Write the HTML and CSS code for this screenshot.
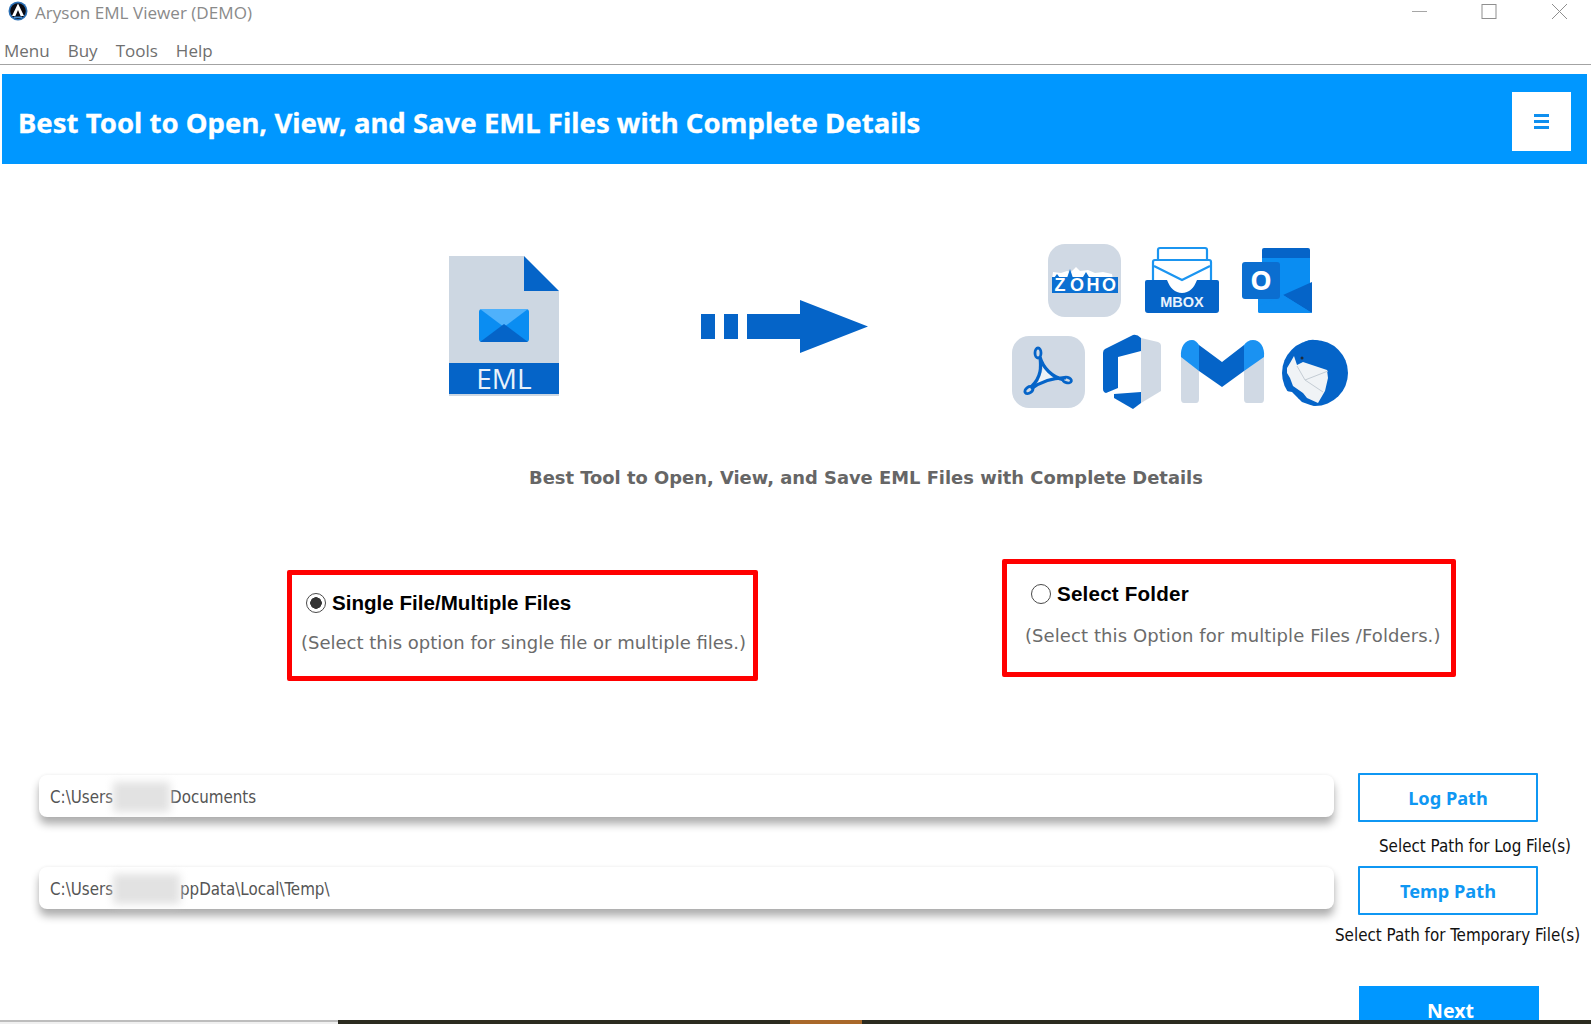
FILE: index.html
```html
<!DOCTYPE html>
<html lang="en">
<head>
<meta charset="utf-8">
<title>Aryson EML Viewer (DEMO)</title>
<link rel="stylesheet" href="styles.css">
</head>
<body>
<div class="app">
  <header class="titlebar">
    <svg class="app-logo" width="20" height="20" viewBox="0 0 20 20">
      <circle cx="10" cy="10" r="9.500" fill="#2a6fb5"/>
      <circle cx="10" cy="10" r="7.800" fill="#0a0a12"/>
      <path d="M10 2.500L16 15H12.600L10 9L7.400 15H4Z" fill="#fff"/>
      <path d="M6 15.500h8v1.500H6z" fill="#4a8fd0"/>
    </svg>
    <span class="app-title">Aryson EML Viewer (DEMO)</span>
    <div class="window-controls">
      <svg width="17" height="17" viewBox="0 0 17 17"><path d="M1 8.500H16" stroke="#a6a6a6" fill="none"/></svg>
      <svg width="17" height="17" viewBox="0 0 17 17"><rect x="1" y="1.500" width="14" height="14" stroke="#8f8f8f" fill="none"/></svg>
      <svg width="17" height="17" viewBox="0 0 17 17"><path d="M1 1L16 16M16 1L1 16" stroke="#8f8f8f" fill="none"/></svg>
    </div>
  </header>
  <nav class="menubar">
    <span class="menu-item">Menu</span>
    <span class="menu-item">Buy</span>
    <span class="menu-item">Tools</span>
    <span class="menu-item">Help</span>
  </nav>
  <section class="banner">
    <h1 class="banner-title">Best Tool to Open, View, and Save EML Files with Complete Details</h1>
    <button class="banner-menu" aria-label="Open menu"><span class="bars"></span></button>
  </section>
  <main class="content">
    <div class="hero">
      <svg class="hero-doc" width="110" height="140" viewBox="0 0 110 140">
        <path d="M0 0H75V35H110V140H0Z" fill="#cdd7e2"/>
        <path d="M75 0L110 35H75Z" fill="#0564c8"/>
        <path d="M30 56a3 3 0 0 1 3-3H77a3 3 0 0 1 3 3V83a3 3 0 0 1-3 3H33a3 3 0 0 1-3-3Z" fill="#0a8df2"/>
        <path d="M31 53H79L55 71Z" fill="#4fb1fb"/>
        <path d="M31 86L55 68L79 86Z" fill="#0564c8"/>
        <rect y="107" width="110" height="31" fill="#0564c8"/>
        <text class="doc-label" x="55" y="133" text-anchor="middle">EML</text>
      </svg>
      <svg class="hero-arrow" width="167" height="53" viewBox="0 0 167 53">
        <path d="M0 14H14V39H0ZM23 14H37V39H23ZM46 14H99V0L167 26.500L99 53V39H46Z" fill="#0564c8"/>
      </svg>
      <svg class="hero-apps" width="336" height="170" viewBox="0 0 336 170">
        <!-- Zoho -->
        <rect x="36" y="0" width="73" height="73" rx="17" fill="#d0d9e4"/>
        <path d="M41 28l8 1 6-2 4 1 5-5 4 4 8-1 7 3 8-1 9 2 1 6H40Z" fill="#fff"/>
        <rect x="40" y="33" width="66" height="16" fill="#0c70d2"/>
        <path d="M55 34l3-9 3 9ZM71 33l3-5 3 5ZM42 34l3-4 3 4Z" fill="#0c70d2"/>
        <text class="zoho-label" text-anchor="middle" y="47"><tspan x="48">Z</tspan><tspan x="65">O</tspan><tspan x="81">H</tspan><tspan x="97">O</tspan></text>
        <!-- MBOX -->
        <path d="M146 16V6a2 2 0 0 1 2-2H193a2 2 0 0 1 2 2V16" fill="none" stroke="#1b95f0" stroke-width="2.200"/>
        <path d="M141 36V18a2 2 0 0 1 2-2H197a2 2 0 0 1 2 2V36" fill="#fff" stroke="#1b95f0" stroke-width="2.200"/>
        <path d="M142 22L170 36L198 22" fill="none" stroke="#1b95f0" stroke-width="2.200"/>
        <path d="M133 38a2 2 0 0 1 2-2H155C158 44 163 49 170 49S182 44 185 36H205a2 2 0 0 1 2 2V66a3 3 0 0 1-3 3H136a3 3 0 0 1-3-3Z" fill="#0564c8"/>
        <text class="mbox-label" x="170" y="63" text-anchor="middle">MBOX</text>
        <!-- Outlook -->
        <path d="M250 6a2 2 0 0 1 2-2H296a2 2 0 0 1 2 2V14H250Z" fill="#0564c8"/>
        <rect x="250" y="14" width="48" height="40" fill="#0a8df2"/>
        <path d="M246 50H300V67a2 2 0 0 1-2 2H248a2 2 0 0 1-2-2Z" fill="#0d8cf0"/>
        <path d="M271 51L300 38V69Z" fill="#0564c8"/>
        <path d="M271 51L246 62V67a2 2 0 0 0 2 2H298L300 69Z" fill="#0d8cf0"/>
        <rect x="230" y="18" width="38" height="37" rx="3" fill="#0b6ed0"/>
        <text class="outlook-label" x="249" y="46" text-anchor="middle">O</text>
        <!-- PDF -->
        <rect x="0" y="92" width="73" height="72" rx="17" fill="#d0d9e4"/>
        <path d="M32 122L41 134L25 141Z" fill="#eef2f6"/>
        <path d="M28 113C29 122 30 133 19 143M28 113C31 124 40 133 52 136M19 145C28 138 42 133 54 134" fill="none" stroke="#0564c8" stroke-width="3.200"/>
        <ellipse cx="26" cy="109" rx="3" ry="5" fill="none" stroke="#0564c8" stroke-width="2.800"/>
        <ellipse cx="17" cy="146" rx="4.500" ry="3" fill="none" stroke="#0564c8" stroke-width="2.800" transform="rotate(-35 17 146)"/>
        <ellipse cx="55" cy="136" rx="4.500" ry="2.800" fill="none" stroke="#0564c8" stroke-width="2.800" transform="rotate(15 55 136)"/>
        <!-- Office -->
        <path d="M129 94L146 98Q149 99 149 102V147L129 159Z" fill="#d0d9e4"/>
        <path d="M93 105L121 91Q125 90 129 94V107L106 113V144L94 149Q91 148 91 145V109Q91 106 93 105Z" fill="#0564c8"/>
        <path d="M102 150L129 148V159L121 165L102 154Z" fill="#0564c8"/>
        <!-- M -->
        <path d="M169 112H187V155Q187 159 184 159H172Q169 159 169 155Z" fill="#d0d9e4"/>
        <path d="M232 112H252V155Q252 159 249 159H235Q232 159 232 155Z" fill="#d0d9e4"/>
        <path d="M169 113C168 103 173 96 180 96C183 96 185 98 187 101V127Z" fill="#1a92f2"/>
        <path d="M252 113C253 103 248 96 241 96C237 96 234 98 232 101V127Z" fill="#1a92f2"/>
        <path d="M187 101L210 118L232 101V127L210 143L187 127Z" fill="#0564c8"/>
        <!-- Thunderbird -->
        <circle cx="303" cy="129" r="33" fill="#0564c8"/>
        <path d="M292 98Q302 93 311 99L300 101Z" fill="#0564c8"/>
        <path d="M275 124L278 119L282 112L285 121L291 118L315 126L316 134L313 147L306 159L295 154L291 149L281 142L278 134L275 129Z" fill="#f0f3f6"/>
        <path d="M285 122L293 136L316 127M293 136L311 148" fill="none" stroke="#c4ccd4" stroke-width="1"/>
        <path d="M268 146L280 148L290 158L304 163L304 168L268 168Z" fill="#fff"/>
        <path d="M283 147L290 150L287 155Z" fill="#0564c8"/>
        <circle cx="290" cy="114" r="1.500" fill="#1d2b3a"/>
      </svg>
    </div>
    <p class="tagline">Best Tool to Open, View, and Save EML Files with Complete Details</p>
    <div class="options">
      <div class="option option-single">
        <label class="option-head">
          <span class="radio radio-on"></span>
          <span class="option-name">Single File/Multiple Files</span>
        </label>
        <p class="option-desc">(Select this option for single file or multiple files.)</p>
      </div>
      <div class="option option-folder">
        <label class="option-head">
          <span class="radio"></span>
          <span class="option-name">Select Folder</span>
        </label>
        <p class="option-desc">(Select this Option for multiple Files /Folders.)</p>
      </div>
    </div>
    <div class="paths">
      <div class="path-row path-row-log">
        <div class="path-field">C:\Users<span class="masked masked-short"></span>Documents</div>
        <div class="path-side">
          <button class="outline-btn">Log Path</button>
          <p class="path-note path-note-log">Select Path for Log File(s)</p>
        </div>
      </div>
      <div class="path-row path-row-temp">
        <div class="path-field">C:\Users<span class="masked masked-long"></span>ppData\Local\Temp\</div>
        <div class="path-side">
          <button class="outline-btn outline-btn-temp">Temp Path</button>
          <p class="path-note path-note-temp">Select Path for Temporary File(s)</p>
        </div>
      </div>
    </div>
    <div class="actions"><button class="next-btn">Next</button></div>
  </main>
  <footer class="taskbar">
    <div class="taskbar-left"></div>
    <div class="taskbar-apps"><span class="taskbar-active"></span></div>
  </footer>
</div>
</body>
</html>
```
FILE: styles.css
```css
* { box-sizing: border-box; }
html, body { margin: 0; padding: 0; background: #fff; }
.app { width: 1591px; height: 1024px; display: flex; flex-direction: column; overflow: hidden; font-family: "Open Sans", sans-serif; }
p, h1 { margin: 0; }
button { font: inherit; cursor: pointer; }

.titlebar { height: 26px; flex: none; display: flex; align-items: center; padding-left: 8px; }
.app-logo { margin-top: -5px; }
.app-title { margin-left: 7px; margin-top: 0; font-size: 17.100px; color: #8a8a8a; line-height: 26px; }
.window-controls { margin-left: auto; display: flex; gap: 53px; padding-right: 23px; margin-top: -3px; }
.window-controls svg { display: block; }

.menubar { height: 39px; flex: none; display: flex; align-items: center; border-bottom: 1px solid #a3a3a3; padding: 12px 0 0 4px; gap: 18px; }
.menu-item { font-size: 17px; color: #6f6f6f; line-height: 24px; }

.banner { height: 90px; flex: none; margin: 9px 4px 0 2px; background: #0097ff; display: flex; align-items: center; justify-content: space-between; padding: 6px 16px 0; }
.banner-title { color: #fff; font-family: "Noto Sans", sans-serif; font-weight: 700; font-size: 27.550px; -webkit-text-stroke: 0.3px #fff; }
.banner-menu { width: 59px; height: 59px; margin-top: -2px; background: #fff; border: 0; display: flex; align-items: center; justify-content: center; padding: 0; }
.bars { display: block; width: 15px; height: 15px; background: linear-gradient(#0f8fef 0 3px, #fff 3px 6px, #0f8fef 6px 9px, #fff 9px 12px, #0f8fef 12px 15px); }

.content { flex: 1; min-height: 0; overflow: hidden; display: flex; flex-direction: column; }
.hero { display: flex; align-items: flex-start; padding: 80px 0 0 449px; height: 250px; flex: none; }
.hero svg { flex: none; display: block; }
.hero-doc { margin-top: 12px; }
.hero-arrow { margin: 56px 0 0 142px; }
.hero-apps { margin-left: 144px; }
.doc-label { font-family: "Open Sans", sans-serif; font-size: 28px; fill: #e9f2fb; }
.zoho-label { font-family: "Liberation Sans", sans-serif; font-weight: 700; font-size: 18px; fill: #fff; }
.mbox-label { font-family: "Liberation Sans", sans-serif; font-weight: 700; font-size: 14.500px; fill: #e8f2fc; }
.outlook-label { font-family: "Open Sans", sans-serif; font-weight: 700; font-size: 27px; fill: #fff; }

.tagline { margin-top: 51px; padding-left: 529px; font-family: "DejaVu Sans", sans-serif; font-weight: 700; font-size: 17.900px; line-height: 26px; color: #666; }

.options { display: flex; align-items: flex-start; gap: 244px; padding-left: 287px; margin-top: 68px; }
.option { border: 5px solid #f00; border-radius: 2px; }
.option-single { width: 471px; height: 111px; margin-top: 11px; padding: 15px 0 0 9px; }
.option-folder { width: 454px; height: 118px; padding: 17px 0 0 18px; }
.option-head { display: flex; align-items: center; gap: 6px; padding-left: 5px; }
.option-folder .option-head { padding-left: 6px; }
.radio { width: 20px; height: 20px; flex: none; border: 1.500px solid #4a4a4a; border-radius: 50%; background: #fff; display: block; }
.radio-on { background: radial-gradient(circle, #333 0 5.500px, #fff 6px); }
.option-name { font-family: "Liberation Sans", sans-serif; font-weight: 700; font-size: 20.600px; line-height: 26px; color: #000; }
.option-folder .option-name { letter-spacing: 0.2px; }
.option-desc { font-family: "DejaVu Sans", sans-serif; font-size: 18px; color: #6b6b6b; line-height: 24px; margin-top: 15px; white-space: nowrap; }
.option-folder .option-desc { margin-top: 17px; letter-spacing: 0.085px; }

.paths { margin-top: 92px; padding-left: 39px; display: flex; flex-direction: column; }
.path-row { display: flex; align-items: flex-start; }
.path-row-log { height: 94px; }
.path-row-temp { height: 119px; }
.path-field { width: 1295px; height: 42px; margin-top: 2px; border-radius: 8px; background: #fff; box-shadow: 0 7px 9px rgba(0,0,0,.32), 0 -1px 3px rgba(0,0,0,.04); padding: 2px 0 0 11px; display: flex; align-items: center; font-family: "DejaVu Sans Condensed", "DejaVu Sans", sans-serif; font-size: 16.800px; color: #555; white-space: nowrap; }
.path-row-temp .path-field { margin-top: 0; }
.masked { display: block; height: 30px; background: #e2e2e2; filter: blur(4px); flex: none; }
.masked-short { width: 57px; }
.masked-long { width: 67px; }
.path-side { width: 257px; flex: none; padding-left: 24px; }
.outline-btn { display: block; width: 180px; height: 49px; background: #fff; border: 2px solid #0f97f3; border-radius: 1px; color: #0f97f3; font-family: "Noto Sans", sans-serif; font-weight: 700; font-size: 18.200px; padding: 0; }
.outline-btn-temp { margin-top: -1px; }
.path-note { font-family: "DejaVu Sans Condensed", "DejaVu Sans", sans-serif; font-size: 16.850px; line-height: 24px; color: #111; white-space: nowrap; }
.path-note-log { margin: 12px 0 0 21px; }
.path-note-temp { margin: 8px 0 0 -23px; }

.actions { padding-left: 1359px; }
.next-btn { display: block; width: 180px; height: 49px; background: #0097ff; border: 0; color: #fff; font-family: "Noto Sans", sans-serif; font-weight: 700; font-size: 19.500px; padding: 0 0 0 3px; }

.taskbar { height: 4px; flex: none; display: flex; }
.taskbar-left { width: 338px; background: #f0f0f0; border-top: 2px solid #bdbdbd; }
.taskbar-apps { flex: 1; background: #2b2b20; padding-left: 452px; }
.taskbar-active { display: block; width: 72px; height: 4px; background: #a9682a; }
```
